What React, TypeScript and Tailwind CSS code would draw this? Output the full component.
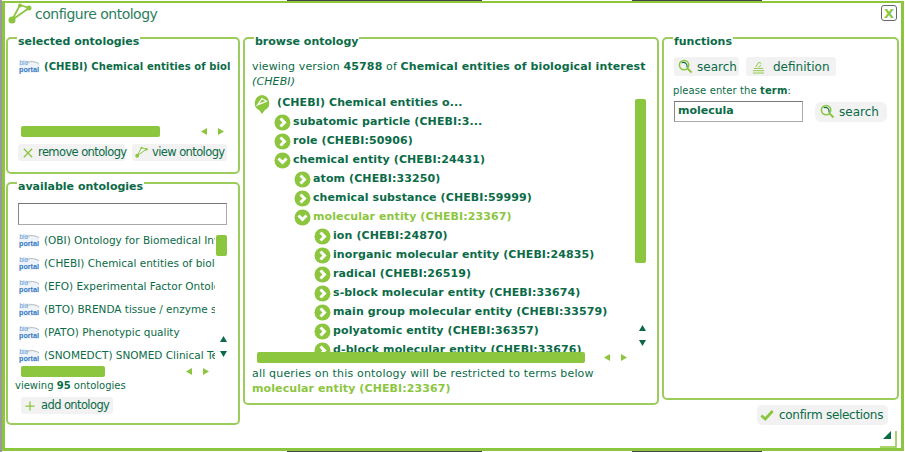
const dark = "text-[#0b6b47]"

const ChevronBall = ({ open }: { open?: boolean }) => (
  <svg width="17" height="17" viewBox="0 0 17 17" className="shrink-0">
    <circle cx="8.5" cy="8.5" r="8" fill="#8cc63f" />
    {open
      ? <path d="M4.5 6.5 L8.5 10.5 L12.5 6.5" fill="none" stroke="#fff" strokeWidth="3" />
      : <path d="M6.5 4.5 L10.5 8.5 L6.5 12.5" fill="none" stroke="#fff" strokeWidth="3" />}
  </svg>
)

const GraphIcon = ({ size = 24 }: { size?: number }) => (
  <svg width={size} height={size} viewBox="0 0 24 24" className="shrink-0">
    <path d="M4 18 L12 3 L21 6 L4 18" fill="none" stroke="#8cc63f" strokeWidth="1.8" />
    <circle cx="4" cy="18" r="3.5" fill="#8cc63f" />
    <circle cx="12" cy="3.5" r="2" fill="#8cc63f" />
    <circle cx="21" cy="6" r="2.5" fill="#8cc63f" />
  </svg>
)

const MagnifierIcon = () => (
  <svg width="15" height="15" viewBox="0 0 16 16" className="shrink-0">
    <circle cx="6.5" cy="6.5" r="5" fill="none" stroke="#8cc63f" strokeWidth="1.6" />
    <path d="M4 4 A4 4 0 0 1 9.5 9" fill="none" stroke="#0b6b47" strokeWidth="1.2" />
    <path d="M10 10 L14.5 14.5" stroke="#8cc63f" strokeWidth="2.2" />
  </svg>
)

const BioPortalIcon = () => (
  <svg width="20" height="15" viewBox="0 0 20 15" className="shrink-0">
    <path d="M0 4 C6 0 14 1 20 4 L20 14 L0 14 Z" fill="#eef3fa" />
    <path d="M7 4 C11 2 16 2 20 5" fill="none" stroke="#aaa" strokeWidth="0.8" />
    <text x="0.5" y="6" fontSize="6.5" fill="#5a96d2" fontFamily="Liberation Sans, sans-serif">bio</text>
    <text x="0" y="13" fontSize="7.5" fontWeight="700" fill="#2f78c4" textLength="20" lengthAdjust="spacingAndGlyphs" fontFamily="Liberation Sans, sans-serif">portal</text>
  </svg>
)

const Arrows = ({ className }: { className: string }) => (
  <div className={`flex gap-[11px] ${className}`}>
    <svg width="6" height="7" viewBox="0 0 6 7"><path d="M6 0 V7 L0 3.5 Z" fill="#8cc63f" /></svg>
    <svg width="6" height="7" viewBox="0 0 6 7"><path d="M0 0 V7 L6 3.5 Z" fill="#8cc63f" /></svg>
  </div>
)

const VerticalArrows = ({ className }: { className: string }) => (
  <div className={`absolute flex flex-col gap-[9px] ${className}`}>
    <svg width="7" height="6" viewBox="0 0 7 6"><path d="M0 6 H7 L3.5 0 Z" fill="#0b6b47" /></svg>
    <svg width="7" height="6" viewBox="0 0 7 6"><path d="M0 0 H7 L3.5 6 Z" fill="#0b6b47" /></svg>
  </div>
)

type ButtonProps = { icon: React.ReactNode, text: string, className?: string }
const ToolButton = ({ icon, text, className = "" }: ButtonProps) => (
  <div className={`flex items-center whitespace-nowrap bg-[#f2f2f2] rounded-[3px] h-[17px] ${dark} ${className}`}>
    {icon}
    <span>{text}</span>
  </div>
)

type PanelProps = { title: string, className?: string, legendClass?: string, children: React.ReactNode }
const Panel = ({ title, className = "", legendClass = "", children }: PanelProps) => (
  <fieldset className={`relative border-2 border-[#9ccc5c] rounded-[5px] min-w-0 ${className}`}>
    <legend className={`relative top-[4px] text-[11px] leading-[11px] font-bold px-[1px] ${dark} ${legendClass}`}>{title}</legend>
    {children}
  </fieldset>
)

const SelectedOntologies = () => (
  <Panel title="selected ontologies" className="h-[142px] pl-[11px]" legendClass="ml-[-2px]">
    <div className="flex items-center gap-[5px] mt-[16px] w-[211px] overflow-hidden whitespace-nowrap">
      <BioPortalIcon />
      <span className={`text-[10px] font-bold tracking-[0.1px] ${dark}`}>(CHEBI) Chemical entities of biological interest</span>
    </div>
    <div className="flex items-center mt-[52px] ml-[2px]">
      <div className="w-[139px] h-[11px] bg-[#8cc63f] rounded-[2px]" />
      <Arrows className="ml-[41px]" />
    </div>
    <div className="flex gap-[7px] mt-[7px] ml-[-1px]">
      <ToolButton
        className="w-[107px] pl-[5px] gap-[5px] text-[11.5px] tracking-[-0.6px]"
        text="remove ontology"
        icon={<svg width="10" height="10" viewBox="0 0 12 12" className="shrink-0"><path d="M1 1 L11 11 M11 1 L1 11" stroke="#8cc63f" strokeWidth="1.6" /></svg>}
      />
      <ToolButton className="w-[95px] pl-[3px] gap-[4px] text-[11.5px] tracking-[-0.6px]" text="view ontology" icon={<GraphIcon size={13} />} />
    </div>
  </Panel>
)

const available = [
  "(OBI) Ontology for Biomedical Investigations",
  "(CHEBI) Chemical entities of biological interest",
  "(EFO) Experimental Factor Ontology",
  "(BTO) BRENDA tissue / enzyme source",
  "(PATO) Phenotypic quality",
  "(SNOMEDCT) SNOMED Clinical Terms",
]

const AvailableOntologies = () => (
  <Panel title="available ontologies" className="h-[248px] pl-[11px]" legendClass="ml-[-2px]">
    <div className="w-[209px] h-[22px] mt-[15px] ml-[-1px] border border-[#aaa] border-t-[#777] border-l-[#888] bg-white" />
    <div className="relative w-[208px] mt-[6px]">
      <div className="flex flex-col gap-[4px]">
        {available.map(name => (
          <div key={name} className="flex items-center gap-[5px] h-[19px] w-[196px] overflow-hidden whitespace-nowrap">
            <BioPortalIcon />
            <span className={`text-[10.5px] ${dark}`}>{name}</span>
          </div>
        ))}
      </div>
      <div className="absolute right-0 top-[4px] w-[11px] h-[21px] bg-[#8cc63f] rounded-[2px]" />
      <VerticalArrows className="right-0 top-[105px]" />
    </div>
    <div className="flex items-center ml-[2px] mt-[1px]">
      <div className="w-[84px] h-[11px] bg-[#8cc63f] rounded-[2px]" />
      <Arrows className="ml-[81px]" />
    </div>
    <div className={`text-[10px] leading-[14px] mt-[2px] ml-[-4px] ${dark}`}>viewing <b>95</b> ontologies</div>
    <ToolButton
      className="w-[92px] ml-[2px] mt-[4px] pl-[4px] gap-[6px] text-[11.5px] tracking-[-0.6px]"
      text="add ontology"
      icon={<svg width="10" height="10" viewBox="0 0 12 12" className="shrink-0"><path d="M6 0.5 V11.5 M0.5 6 H11.5" stroke="#8cc63f" strokeWidth="1.5" /></svg>}
    />
  </Panel>
)

type TreeNode = { label: string, depth: number, open?: boolean, active?: boolean }
const nodes: TreeNode[] = [
  { label: "subatomic particle (CHEBI:3...", depth: 0 },
  { label: "role (CHEBI:50906)", depth: 0 },
  { label: "chemical entity (CHEBI:24431)", depth: 0, open: true },
  { label: "atom (CHEBI:33250)", depth: 1 },
  { label: "chemical substance (CHEBI:59999)", depth: 1 },
  { label: "molecular entity (CHEBI:23367)", depth: 1, open: true, active: true },
  { label: "ion (CHEBI:24870)", depth: 2 },
  { label: "inorganic molecular entity (CHEBI:24835)", depth: 2 },
  { label: "radical (CHEBI:26519)", depth: 2 },
  { label: "s-block molecular entity (CHEBI:33674)", depth: 2 },
  { label: "main group molecular entity (CHEBI:33579)", depth: 2 },
  { label: "polyatomic entity (CHEBI:36357)", depth: 2 },
  { label: "d-block molecular entity (CHEBI:33676)", depth: 2 },
]

const depthClass = ["pl-[22px]", "pl-[42px]", "pl-[62px]"]

const BrowseOntology = () => (
  <Panel title="browse ontology" className="w-[416px] h-[373px] pl-[7px]" legendClass="ml-[2px]">
    <p className={`text-[11px] leading-[15px] tracking-[0.12px] mt-[16px] whitespace-nowrap ${dark}`}>
      viewing version <b>45788</b> of <b>Chemical entities of biological interest</b>
      <br />
      <i>(CHEBI)</i>
    </p>
    <div className="relative mt-[5px] h-[258px]">
      <div className="h-[258px] overflow-hidden">
        <div className="flex items-center gap-[6px] h-[19px] ml-[1px]">
          <svg width="18" height="20" viewBox="0 0 20 22" className="shrink-0">
            <path d="M10 1 A9 9 0 0 1 13 18 L10 22 L7 18 A9 9 0 0 1 10 1 Z" fill="#8cc63f" />
            <path d="M5 12 L10 5 L15 8 Z" fill="none" stroke="#fff" strokeWidth="1.3" />
          </svg>
          <span className={`text-[11px] font-bold tracking-[0.1px] ${dark}`}>(CHEBI) Chemical entities o...</span>
        </div>
        {nodes.map(node => (
          <div key={node.label} className={`flex items-center gap-[2px] h-[19px] whitespace-nowrap ${depthClass[node.depth]}`}>
            <ChevronBall open={node.open} />
            <span className={`text-[11px] font-bold tracking-[0.1px] ${node.active ? "text-[#8cc63f]" : dark}`}>{node.label}</span>
          </div>
        ))}
      </div>
      <div className="absolute right-[11px] top-[5px] w-[11px] h-[164px] bg-[#8cc63f] rounded-[2px]" />
      <VerticalArrows className="right-[11px] top-[231px]" />
    </div>
    <div className="flex items-center ml-[5px] relative">
      <div className="w-[328px] h-[11px] bg-[#8cc63f] rounded-[2px]" />
      <Arrows className="ml-[19px]" />
    </div>
    <p className={`text-[11px] leading-[15px] tracking-[0.18px] mt-[3px] whitespace-nowrap ${dark}`}>
      all queries on this ontology will be restricted to terms below
      <br />
      <b className="text-[#8cc63f] tracking-[0.1px]">molecular entity (CHEBI:23367)</b>
    </p>
  </Panel>
)

const Functions = () => (
  <Panel title="functions" className="w-[237px] h-[368px] pl-[10px]" legendClass="ml-[-1px]">
    <div className="flex gap-[7px] mt-[14px]">
      <ToolButton className="w-[65px] h-[19px] pl-[4px] gap-[4px] text-[12px]" text="search" icon={<MagnifierIcon />} />
      <ToolButton
        className="w-[90px] h-[19px] pl-[6px] gap-[8px] text-[12px]"
        text="definition"
        icon={
          <svg width="13" height="14" viewBox="0 0 14 14" className="shrink-0">
            <path d="M1 11 H13 M1 13.5 H13 M2 8.5 H12" stroke="#8cc63f" strokeWidth="1" />
            <path d="M4 7 L7 2 L10 3 M7 7 L10 5" fill="none" stroke="#8cc63f" strokeWidth="1" />
          </svg>
        }
      />
    </div>
    <div className={`text-[10px] leading-[14px] tracking-[0.1px] mt-[8px] ml-[-1px] ${dark}`}>please enter the <b>term</b>:</div>
    <div className="flex items-center gap-[12px] mt-[3px]">
      <div className={`flex items-center w-[129px] h-[21px] pl-[3px] border border-[#aaa] border-t-[#777] border-l-[#888] text-[11px] font-bold ${dark}`}>molecula</div>
      <ToolButton className="w-[72px] h-[20px] pl-[5px] gap-[4px] rounded-[6px] text-[12px]" text="search" icon={<MagnifierIcon />} />
    </div>
  </Panel>
)

const PageEdge = () => (
  <div className="flex h-[1px]">
    <div className="ml-[285px] w-[195px] bg-[#444]" />
    <div className="ml-[150px] w-[130px] bg-[#444]" />
  </div>
)

const App = () => {
  return (
    <div className="w-[905px] h-[452px] bg-white overflow-hidden border-l-2 border-[#999] font-['DejaVu_Sans','Liberation_Sans',sans-serif]">
      <PageEdge />
      <div className="relative w-[902px] h-[450px] border-[3px] border-[#8cc63f] border-t-2 bg-white">
        <div className="flex items-center gap-[3px] h-[22px] pl-[3px]">
          <GraphIcon size={24} />
          <span className="text-[14px] tracking-[-0.5px] text-[#2c7d5c]">configure ontology</span>
        </div>
        <div className="absolute right-[4px] top-[2px] flex items-center justify-center w-[16px] h-[16px] border border-[#666] rounded-[3px] text-[13px] font-bold leading-none text-[#8cc63f]">X</div>
        <div className="flex gap-[3px] mt-[7px] pl-[1px]">
          <div className="flex flex-col gap-[3px] w-[234px]">
            <SelectedOntologies />
            <AvailableOntologies />
          </div>
          <BrowseOntology />
          <Functions />
        </div>
        <div className="absolute right-[13px] top-[402px]">
          <ToolButton
            className="w-[131px] h-[20px] pl-[3px] gap-[5px] rounded-[5px] text-[12px] tracking-[-0.3px]"
            text="confirm selections"
            icon={<svg width="14" height="12" viewBox="0 0 16 13" className="shrink-0"><path d="M1.5 7 L6 11 L14.5 2" fill="none" stroke="#8cc63f" strokeWidth="3.2" /></svg>}
          />
        </div>
        <svg width="17" height="17" viewBox="0 0 17 17" className="absolute right-[4px] bottom-[0px]">
          <path d="M3 8 H11 V0 Z" fill="#0b6b47" />
          <path d="M0 16 H16 V0" fill="none" stroke="#8cc63f" strokeWidth="1.5" />
        </svg>
      </div>
      <PageEdge />
    </div>
  )
}

export default App
